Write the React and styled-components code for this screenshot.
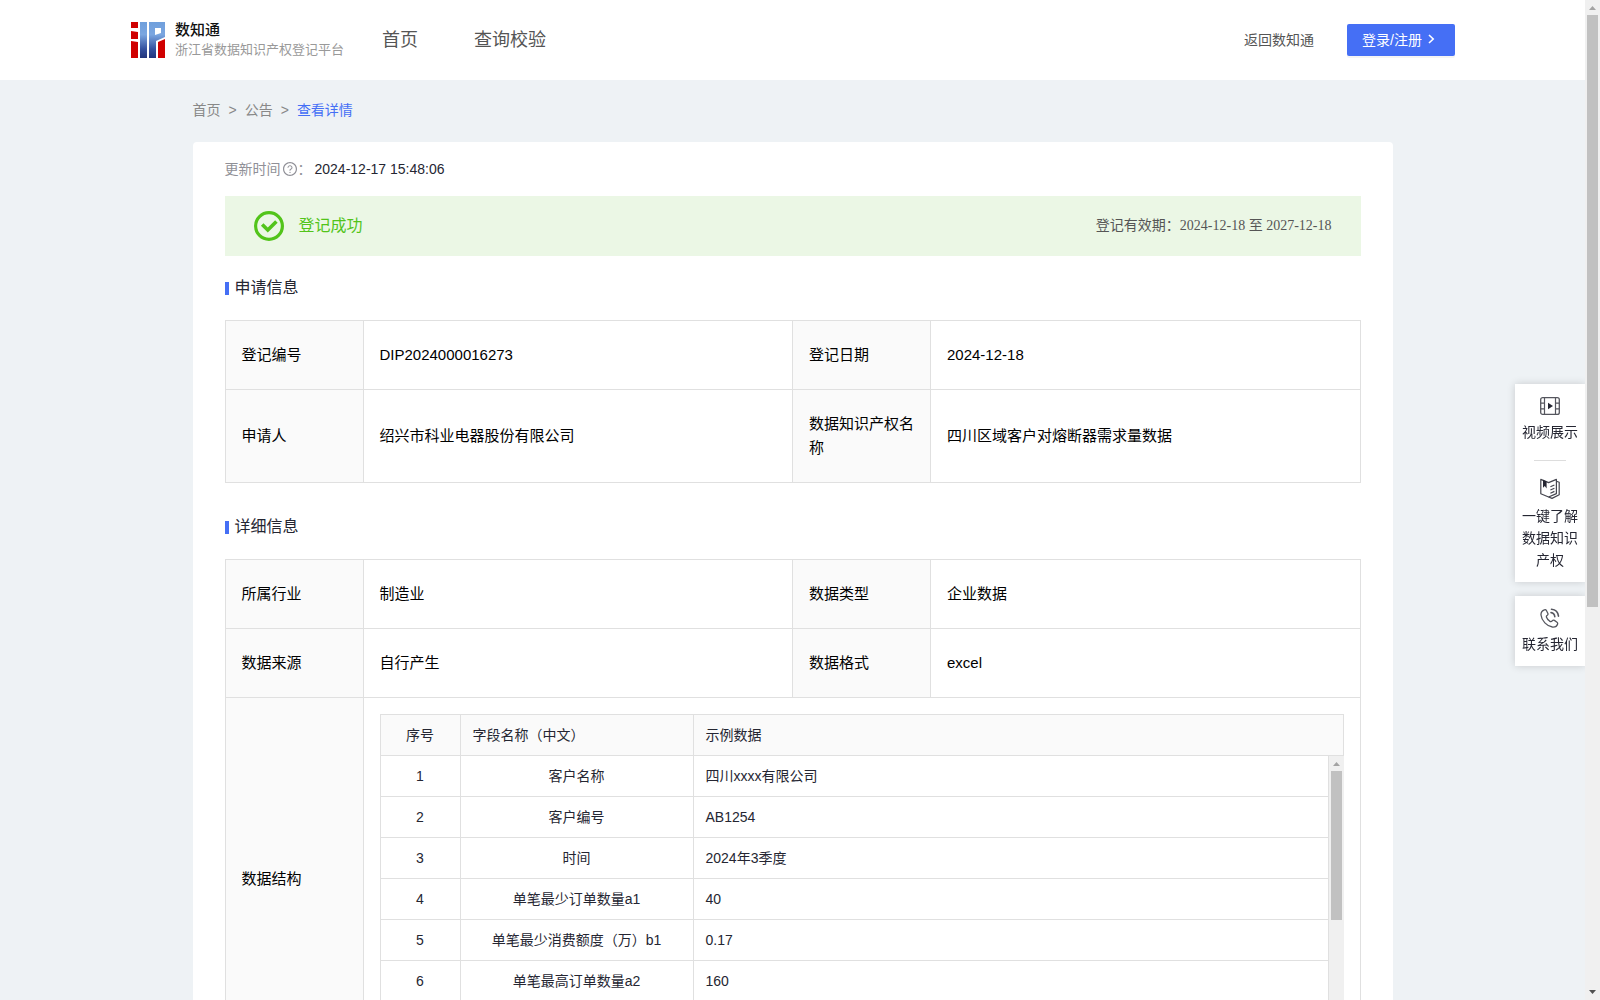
import React from 'react'
import styled, { createGlobalStyle } from 'styled-components'
import { AiOutlineQuestionCircle } from 'react-icons/ai'

const sans = '"Liberation Sans", "Noto Sans CJK SC", sans-serif'
const serif = '"Liberation Serif", "Noto Sans CJK SC", serif'

const applyInfo = [
    ['登记编号', 'DIP2024000016273', '登记日期', '2024-12-18'],
    ['申请人', '绍兴市科业电器股份有限公司', '数据知识产权名称', '四川区域客户对熔断器需求量数据'],
]

const detailInfo = [
    ['所属行业', '制造业', '数据类型', '企业数据'],
    ['数据来源', '自行产生', '数据格式', 'excel'],
]

const fields = [
    ['客户名称', '四川xxxx有限公司'],
    ['客户编号', 'AB1254'],
    ['时间', '2024年3季度'],
    ['单笔最少订单数量a1', '40'],
    ['单笔最少消费额度（万）b1', '0.17'],
    ['单笔最高订单数量a2', '160'],
]

function Logo() {
    return (
        <svg width="34" height="36" viewBox="0 0 34 36" aria-hidden="true">
            <defs>
                <linearGradient id="logoBlue" x1="0" y1="0" x2="0" y2="36" gradientUnits="userSpaceOnUse">
                    <stop offset="0" stopColor="#6f9fdc" />
                    <stop offset="0.35" stopColor="#7ba6e0" />
                    <stop offset="0.75" stopColor="#34519f" />
                    <stop offset="1" stopColor="#22357c" />
                </linearGradient>
            </defs>
            <path d="M0 0h7v6H0zM0 9l7 1v7H0zM0 19l7 1v16H0z" fill="#d00000" />
            <path d="M9 0h7v36H9z" fill="url(#logoBlue)" />
            <path d="M18 0h16v15l-9 4v17h-7zM24 6v7l6-2V6z" fill="url(#logoBlue)" fillRule="evenodd" />
            <path d="M27 20l7-3v19h-7z" fill="#d00000" />
        </svg>
    )
}

function CheckIcon() {
    return (
        <svg width="30" height="30" viewBox="0 0 30 30" fill="none" stroke="#52c41a" aria-hidden="true">
            <circle cx="15" cy="15" r="13.4" strokeWidth="3.2" />
            <path d="M8.200 13.400l5.600 5.600 8.600-8.600" strokeWidth="3.600" />
        </svg>
    )
}

function VideoIcon() {
    return (
        <svg width="20" height="20" viewBox="0 0 20 20" fill="none" stroke="#55565e" aria-hidden="true">
            <rect x="0.7" y="1.6" width="18.6" height="16.8" rx="2" strokeWidth="1.3" />
            <path d="M4.5 1.6v16.8M15.5 1.6v16.8M1 7.2h3.5M1 12.8h3.5M15.5 7.2H19M15.5 12.8H19" strokeWidth="1.2" />
            <path d="M8 6.8l5 3.2-5 3.2z" fill="#252632" stroke="none" />
        </svg>
    )
}

function BookIcon() {
    return (
        <svg width="20" height="22" viewBox="0 0 20 22" fill="none" stroke="#44454e" strokeWidth="1.2" strokeLinejoin="round" aria-hidden="true">
            <path d="M.8 1.400L8.600 4.600l7.800-3.200v14.200L8.600 19 .8 15.800z" />
            <path d="M16.400 3.200l2.800 1v12.600L12 20.400l-3.400-1.400" />
            <path d="M3 1.800v8l1.800-1.800 1.800 2.600V3.600z" fill="#252632" stroke="none" />
            <path d="M10.400 8.800l4-1.800M10.400 12l4-1.800M10.400 15.200l4-1.800" />
        </svg>
    )
}

function PhoneIcon() {
    return (
        <svg width="20" height="20" viewBox="0 0 20 20" fill="none" stroke="#55565e" strokeWidth="1.3" strokeLinecap="round" strokeLinejoin="round" aria-hidden="true">
            <path d="M4.400 1.800C2.200 2.600.8 4.400 1 7c.5 5.600 6 11.400 11.400 12 2.600.2 4.600-.8 5.200-3 .2-.8 0-1.400-.6-1.800l-2.600-1.800c-.8-.5-1.600-.3-2.200.4-.8 1-1.600 1-2.600.3C8 11.800 7 10.600 6.500 9.200c-.3-.8 0-1.500.8-2 .7-.5.9-1.200.5-2L6.400 2.500c-.4-.8-1.100-1-2-.7z" />
            <path d="M11 4.600c2 .2 3.600 1.900 3.800 4.200M11.500 1.200c3.900.3 6.600 3.200 7 7" strokeWidth="1.600" />
        </svg>
    )
}

function ScrollBar({ size }) {
    return (
        <TrackStyled aria-hidden="true">
            <svg width="15" height="15" viewBox="0 0 15 15"><path d="M4 10h7L7.500 6z" fill="#a3a3a3" /></svg>
            <div className="rail">
                <div className="thumb" style={{ height: size }}></div>
            </div>
            <svg width="15" height="15" viewBox="0 0 15 15"><path d="M4 5h7L7.500 9z" fill="#505050" /></svg>
        </TrackStyled>
    )
}

function InfoRows({ rows }) {
    return rows.map(([label, value, label2, value2]) => (
        <tr key={label}>
            <th scope="row">{label}</th>
            <td>{value}</td>
            <th scope="row">{label2}</th>
            <td>{value2}</td>
        </tr>
    ))
}

function InfoColumns() {
    return (
        <colgroup>
            <col className="label" />
            <col />
            <col className="label" />
            <col />
        </colgroup>
    )
}

function FieldColumns() {
    return (
        <colgroup>
            <col className="index" />
            <col className="name" />
            <col />
        </colgroup>
    )
}

function FieldList() {
    return (
        <FieldListStyled>
            <FieldTable className="head">
                <FieldColumns />
                <thead>
                    <tr>
                        <th scope="col">序号</th>
                        <th scope="col">字段名称（中文）</th>
                        <th scope="col">示例数据</th>
                    </tr>
                </thead>
            </FieldTable>
            <div className="body">
                <div className="rows">
                    <FieldTable>
                        <FieldColumns />
                        <tbody>
                            {fields.map(([name, sample], i) => (
                                <tr key={name}>
                                    <td>{i + 1}</td>
                                    <td>{name}</td>
                                    <td>{sample}</td>
                                </tr>
                            ))}
                        </tbody>
                    </FieldTable>
                </div>
                <ScrollBar size="149px" />
            </div>
        </FieldListStyled>
    )
}

function Header() {
    return (
        <HeaderStyled>
            <Brand href="#">
                <Logo />
                <span>
                    <strong>数知通</strong>
                    <small>浙江省数据知识产权登记平台</small>
                </span>
            </Brand>
            <Nav>
                <a href="#">首页</a>
                <a href="#">查询校验</a>
            </Nav>
            <BackLink href="#">返回数知通</BackLink>
            <LoginButton type="button">
                登录/注册
                <svg width="14" height="14" viewBox="0 0 14 14" fill="none" stroke="#fff" strokeWidth="1.600" aria-hidden="true">
                    <path d="M3 3l4.200 4L3 11" />
                </svg>
            </LoginButton>
        </HeaderStyled>
    )
}

function SideTools() {
    return (
        <SideStyled>
            <SideBox>
                <a href="#"><VideoIcon />视频展示</a>
                <hr />
                <a href="#"><BookIcon />一键了解数据知识产权</a>
            </SideBox>
            <SideBox>
                <a href="#"><PhoneIcon />联系我们</a>
            </SideBox>
        </SideStyled>
    )
}

function App() {
    return (
        <PageStyled>
            <GlobalStyle />
            <div className="content">
                <Header />
                <Main>
                    <Breadcrumb>
                        <a href="#">首页</a>
                        <span>&gt;</span>
                        <a href="#">公告</a>
                        <span>&gt;</span>
                        <a href="#" className="active">查看详情</a>
                    </Breadcrumb>
                    <Card>
                        <UpdateTime>
                            更新时间<AiOutlineQuestionCircle size={16} />：
                            <time>2024-12-17 15:48:06</time>
                        </UpdateTime>
                        <Banner>
                            <CheckIcon />
                            <p>登记成功</p>
                            <div>登记有效期：2024-12-18 至 2027-12-18</div>
                        </Banner>
                        <SectionTitle>申请信息</SectionTitle>
                        <InfoTable>
                            <InfoColumns />
                            <tbody>
                                <InfoRows rows={applyInfo} />
                            </tbody>
                        </InfoTable>
                        <SectionTitle $spaced>详细信息</SectionTitle>
                        <InfoTable>
                            <InfoColumns />
                            <tbody>
                                <InfoRows rows={detailInfo} />
                                <tr>
                                    <th scope="row">数据结构</th>
                                    <td colSpan="3" className="nested"><FieldList /></td>
                                </tr>
                            </tbody>
                        </InfoTable>
                    </Card>
                </Main>
            </div>
            <SideTools />
            <ScrollBar size="61%" />
        </PageStyled>
    )
}

const GlobalStyle = createGlobalStyle`
    *{
        box-sizing: border-box;
    }
    body{
        margin: 0;
        font-family: ${sans};
        font-size: 14px;
        line-height: 22px;
        color: #252632;
    }
    a{
        color: inherit;
        text-decoration: none;
    }
    svg{
        flex: none;
    }
`;

const PageStyled = styled.div`
    display: flex;
    height: 100vh;
    background-color: #eef2f5;
    .content{
        flex: 1;
        min-width: 0;
        overflow-y: auto;
        scrollbar-width: none;
    }
`;

const TrackStyled = styled.div`
    display: flex;
    flex-direction: column;
    flex: none;
    width: 15px;
    background-color: #f0f0f0;
    .rail{
        flex: 1;
        padding: 0 2px;
    }
    .thumb{
        background-color: #c1c1c1;
    }
`;

const HeaderStyled = styled.header`
    display: flex;
    align-items: center;
    height: 80px;
    padding: 0 130px 0 131px;
    background-color: #fff;
`;

const Brand = styled.a`
    display: flex;
    align-items: center;
    gap: 10px;
    strong, small{
        display: block;
        line-height: 20px;
    }
    strong{
        font-size: 15px;
        font-weight: 500;
        color: #111;
    }
    small{
        font-size: 13px;
        color: #999;
    }
`;

const Nav = styled.nav`
    display: flex;
    flex: 1;
    gap: 56px;
    margin-left: 38px;
    font-size: 18px;
    color: #555;
`;

const BackLink = styled.a`
    margin-right: 33px;
    color: #555;
`;

const LoginButton = styled.button`
    display: flex;
    align-items: center;
    gap: 4px;
    height: 32px;
    padding: 0 15px 2px;
    border: none;
    border-radius: 2px;
    background-color: #456ff5;
    box-shadow: 0 2px 0 rgba(0, 0, 0, 0.045);
    color: #fff;
    font-family: inherit;
    font-size: 14px;
    cursor: pointer;
`;

const Main = styled.main`
    max-width: 1200px;
    margin: 0 auto;
`;

const Breadcrumb = styled.nav`
    display: flex;
    gap: 8px;
    padding: 19px 0 21px;
    color: #888;
    .active{
        color: #456ff5;
    }
`;

const Card = styled.section`
    padding: 16px 32px 32px;
    border-radius: 4px;
    background-color: #fff;
`;

const UpdateTime = styled.div`
    display: flex;
    align-items: center;
    margin-bottom: 16px;
    color: #909097;
    svg{
        margin-left: 1px;
    }
    time{
        margin-left: 3px;
        color: #252632;
    }
`;

const Banner = styled.div`
    display: flex;
    align-items: center;
    height: 60px;
    padding: 0 29px;
    background-color: #ebf7e5;
    p{
        flex: 1;
        margin: 0 0 0 15px;
        font-size: 16px;
        color: #52c41a;
    }
    div{
        font-family: ${serif};
        color: #555;
    }
`;

const SectionTitle = styled.h2`
    display: flex;
    align-items: center;
    gap: 6px;
    height: 64px;
    margin: ${props => props.$spaced ? '12px 0 0' : '0'};
    font-size: 16px;
    font-weight: 400;
    &::before{
        content: '';
        width: 4px;
        height: 13px;
        background-color: #456ff5;
    }
`;

const InfoTable = styled.table`
    width: 100%;
    table-layout: fixed;
    border-collapse: collapse;
    font-size: 15px;
    line-height: 24px;
    color: #000;
    .label{
        width: 138px;
    }
    > tbody > tr > th, > tbody > tr > td{
        padding: 22px 16px;
        border: 1px solid #e0e0e0;
        text-align: left;
        font-weight: 400;
    }
    > tbody > tr > th{
        background-color: #fafafa;
    }
    > tbody > tr > .nested{
        padding: 16px;
    }
`;

const FieldListStyled = styled.div`
    border-left: 1px solid #e0e0e0;
    font-size: 14px;
    line-height: 22px;
    color: #252632;
    .head{
        border-top: 1px solid #e0e0e0;
        background-color: #fafafa;
    }
    .body{
        display: flex;
        height: 288px;
    }
    .rows{
        flex: 1;
        overflow-y: auto;
        scrollbar-width: none;
    }
`;

const FieldTable = styled.table`
    width: 100%;
    table-layout: fixed;
    border-collapse: separate;
    border-spacing: 0;
    .index{
        width: 80px;
    }
    .name{
        width: 233px;
    }
    th, td{
        padding: 9px 12px;
        border: solid #e0e0e0;
        border-width: 0 1px 1px 0;
        text-align: left;
        font-weight: 400;
    }
    th:first-child, td:first-child, td:nth-child(2){
        text-align: center;
    }
`;

const SideStyled = styled.aside`
    position: fixed;
    top: 384px;
    right: 15px;
    display: flex;
    flex-direction: column;
    gap: 14px;
    width: 70px;
`;

const SideBox = styled.div`
    padding: 12px 6px 11px;
    background-color: #fff;
    box-shadow: 0 0 8px rgba(0, 0, 0, 0.16);
    clip-path: inset(-10px 0 -10px -10px);
    a{
        display: flex;
        flex-direction: column;
        align-items: center;
        gap: 5px;
        text-align: center;
    }
    hr{
        width: 32px;
        height: 1px;
        margin: 17px auto;
        border: none;
        background-color: #ddd;
    }
`;

export default App;
